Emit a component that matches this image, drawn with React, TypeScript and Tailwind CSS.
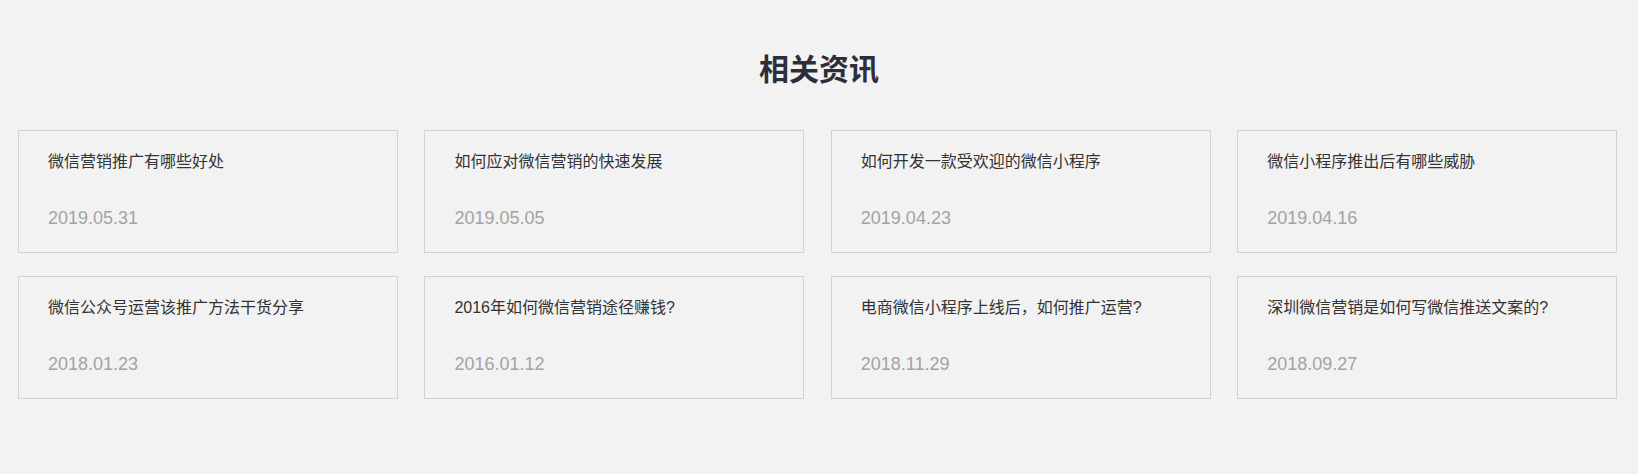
import React from 'react';

const news = [
  { title: '微信营销推广有哪些好处', date: '2019.05.31' },
  { title: '如何应对微信营销的快速发展', date: '2019.05.05' },
  { title: '如何开发一款受欢迎的微信小程序', date: '2019.04.23' },
  { title: '微信小程序推出后有哪些威胁', date: '2019.04.16' },
  { title: '微信公众号运营该推广方法干货分享', date: '2018.01.23' },
  { title: '2016年如何微信营销途径赚钱?', date: '2016.01.12' },
  { title: '电商微信小程序上线后，如何推广运营?', date: '2018.11.29' },
  { title: '深圳微信营销是如何写微信推送文案的?', date: '2018.09.27' },
];

const App: React.FC = () => {
  return (
    <div
      className="min-h-[474px] bg-[#f2f2f2] pt-[50px] pb-[76px]"
      style={{ fontFamily: '"Liberation Sans", "Noto Sans CJK SC", sans-serif' }}
    >
      {/* Section title */}
      <h2 className="text-center text-[30px] leading-[40px] font-bold text-[#2e2e3a]">相关资讯</h2>

      {/* News grid */}
      <div className="w-[1599px] ml-[18px] mt-[40px] grid grid-cols-4 gap-x-[26.67px] gap-y-[23px]">
        {news.map((item, index) => (
          <div
            key={index}
            className="h-[123px] border border-[#d3d3d3] pl-[29px] pr-4 pt-[19px]"
          >
            <p className="text-[16px] leading-[24px] text-[#333]">{item.title}</p>
            <p className="mt-[32px] text-[18px] leading-[24px] text-[#a3a3a3]">{item.date}</p>
          </div>
        ))}
      </div>
    </div>
  );
};

export default App;
